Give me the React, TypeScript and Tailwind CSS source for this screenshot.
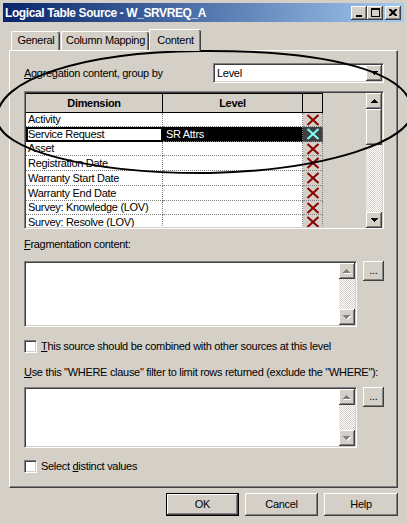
import React from "react";

const sunken =
  "border border-t-[#808080] border-l-[#808080] border-b-white border-r-white shadow-[inset_1px_1px_0_#404040,inset_-1px_-1px_0_#d4d0c8]";
const raised =
  "shadow-[inset_-1px_-1px_0_#404040,inset_1px_1px_0_#ffffff,inset_-2px_-2px_0_#808080,inset_2px_2px_0_#d4d0c8]";
const dither =
  "bg-[image:repeating-conic-gradient(#ffffff_0%_25%,#d4d0c8_0%_50%)] bg-[length:2px_2px]";

const UP = "M3 0h1v1h1v1h1v1h1v1H0V3h1V2h1V1h1z";
const DOWN = "M0 0h7v1h-1v1h-1v1h-1v1h-1v-1h-1v-1h-1v-1h-1z";

function Arrow({ dir, disabled }: { dir: "up" | "down"; disabled?: boolean }) {
  const d = dir === "up" ? UP : DOWN;
  if (disabled) {
    return (
      <svg width="8" height="5" viewBox="0 0 8 5" className="block">
        <path d={d} fill="#ffffff" transform="translate(1 1)" />
        <path d={d} fill="#808080" />
      </svg>
    );
  }
  return (
    <svg width="7" height="4" viewBox="0 0 7 4" className="block">
      <path d={d} fill="#000000" />
    </svg>
  );
}

function ScrollBtn({ dir, disabled }: { dir: "up" | "down"; disabled?: boolean }) {
  return (
    <div className={`w-[16px] h-[16px] shrink-0 bg-[#d4d0c8] ${raised} flex items-center justify-center`}>
      <Arrow dir={dir} disabled={disabled} />
    </div>
  );
}

function XMark({ color }: { color: string }) {
  return (
    <svg width="14" height="12" viewBox="0 0 14 12" className="block">
      <path d="M1.5 1 Q7 6 12.5 11" stroke={color} strokeWidth="2" fill="none" />
      <path d="M12.5 1 Q7 6 1.5 11" stroke={color} strokeWidth="2" fill="none" />
    </svg>
  );
}

function Checkbox() {
  return <div className={`w-[13px] h-[13px] shrink-0 bg-white ${sunken}`} />;
}

function TextBox({ h }: { h: string }) {
  return (
    <div className="flex items-start gap-[6px]">
      <div className={`w-[333px] ${h} bg-white ${sunken} p-[1px] flex justify-end`}>
        <div className="w-[16px] h-full flex flex-col">
          <ScrollBtn dir="up" disabled />
          <div className={`flex-1 ${dither}`} />
          <ScrollBtn dir="down" disabled />
        </div>
      </div>
      <div className={`w-[21px] h-[20px] bg-[#d4d0c8] ${raised} flex items-center justify-center text-[11px] leading-none pb-[2px]`}>
        ...
      </div>
    </div>
  );
}

function TitleBtn({ children }: { children: React.ReactNode }) {
  return (
    <div className={`w-[16px] h-[14px] bg-[#d4d0c8] ${raised} flex items-center justify-center`}>{children}</div>
  );
}

const rows = [
  "Activity",
  "Service Request",
  "Asset",
  "Registration Date",
  "Warranty Start Date",
  "Warranty End Date",
  "Survey: Knowledge (LOV)",
  "Survey: Resolve (LOV)",
];
const heights = [14, 15, 14, 15, 15, 15, 14, 15];

export default function App() {
  return (
    <div className="w-[407px] h-[524px] bg-[#d4d0c8] relative overflow-hidden pt-[3px] px-[3px] font-['Liberation_Sans',Arial,sans-serif] text-[11px] tracking-[-0.3px] text-black">
      {/* Title bar */}
      <div className="h-[19px] bg-gradient-to-r from-[#0a246a] to-[#a6caf0] flex items-center justify-between pl-[2px] pr-[3px]">
        <span className="text-white font-bold text-[12px] tracking-[-0.4px] leading-none">
          Logical Table Source - W_SRVREQ_A
        </span>
        <div className="flex items-center">
          <TitleBtn>
            <svg width="8" height="9" viewBox="0 0 8 9" className="block">
              <rect x="1" y="7" width="6" height="2" fill="#000" />
            </svg>
          </TitleBtn>
          <TitleBtn>
            <svg width="9" height="9" viewBox="0 0 9 9" className="block">
              <path d="M0 0h9v9H0z M1 2v6h7V2z" fill="#000" fillRule="evenodd" />
            </svg>
          </TitleBtn>
          <div className="w-[2px]" />
          <TitleBtn>
            <svg width="8" height="7" viewBox="0 0 8 7" className="block">
              <path d="M0 0h2l2 2 2-2h2v1L5.5 3.5 8 6v1H6L4 5 2 7H0V6l2.5-2.5L0 1z" fill="#000" />
            </svg>
          </TitleBtn>
        </div>
      </div>

      {/* Tabs */}
      <div className="mt-[7px] ml-[8px] h-[21px] flex items-end">
        <div className="w-[49px] h-[19px] border-t border-l border-white rounded-tl-[2px] rounded-tr-[2px] shadow-[inset_-1px_0_0_#404040,inset_-2px_0_0_#808080] flex items-center justify-center pb-[1px]">
          General
        </div>
        <div className="ml-[1px] w-[88px] h-[19px] border-t border-l border-white rounded-tl-[2px] rounded-tr-[2px] shadow-[inset_-1px_0_0_#404040,inset_-2px_0_0_#808080] flex items-center justify-center pb-[1px]">
          Column Mapping
        </div>
        <div className="ml-[0px] w-[52px] h-[22px] mb-[-1px] relative z-10 bg-[#d4d0c8] border-t border-l border-white rounded-tl-[2px] rounded-tr-[2px] shadow-[inset_-1px_0_0_#404040,inset_-2px_0_0_#808080] flex items-center justify-center pb-[1px]">
          Content
        </div>
      </div>

      {/* Panel */}
      <div className="ml-[6px] w-[389px] h-[438px] border-t border-l border-white border-r border-r-[#404040] border-b border-b-[#404040] shadow-[inset_-1px_-1px_0_#808080] pl-[14px] flex flex-col">
        {/* Aggregation */}
        <div className="mt-[12px] w-[360px] h-[20px] flex items-center justify-between">
          <span>
            <span className="underline">A</span>ggregation content, group by
          </span>
          <div className={`w-[171px] h-[20px] bg-white ${sunken} p-[1px] flex items-center`}>
            <span className="flex-1 pl-[2px]">Level</span>
            <ScrollBtn dir="down" />
          </div>
        </div>

        {/* Table */}
        <div className={`mt-[8px] w-[360px] h-[138px] bg-[#d4d0c8] ${sunken} p-[1px] flex overflow-hidden`}>
          <div className="w-[297px] shrink-0 flex flex-col overflow-hidden">
            <div className="h-[20px] shrink-0 flex font-bold">
              <div className="w-[137px] border-t border-b border-r border-black flex items-center justify-center">
                Dimension
              </div>
              <div className="w-[140px] border-t border-b border-r border-black flex items-center justify-center">
                Level
              </div>
              <div className="w-[20px] border-t border-b border-r border-black" />
            </div>
            {rows.map((name, i) => {
              const sel = i === 1;
              return (
                <div key={name} className="flex shrink-0" style={{ height: heights[i] }}>
                  <div
                    className={`w-[137px] shrink-0 bg-white border-r border-b border-dotted border-[#808080] pl-[2px] flex items-center whitespace-nowrap overflow-hidden leading-none ${
                      sel ? "outline-2 outline-black -outline-offset-2" : ""
                    }`}
                  >
                    {name}
                  </div>
                  <div
                    className={`w-[140px] shrink-0 border-r border-b border-dotted border-[#808080] pl-[3px] flex items-center leading-none ${
                      sel ? "bg-black text-white" : "bg-white"
                    }`}
                  >
                    {sel ? "SR Attrs" : ""}
                  </div>
                  <div
                    className={`w-[20px] shrink-0 border-r border-b border-dotted border-[#808080] flex items-center justify-center ${
                      sel ? "bg-[#404040]" : "bg-[#d4d0c8]"
                    }`}
                  >
                    <XMark color={sel ? "#80ffff" : "#8b0000"} />
                  </div>
                </div>
              );
            })}
          </div>
          <div className="flex-1" />
          <div className="w-[16px] h-[135px] shrink-0 flex flex-col">
            <ScrollBtn dir="up" />
            <div className={`w-[16px] h-[36px] bg-[#d4d0c8] ${raised}`} />
            <div className={`flex-1 ${dither}`} />
            <ScrollBtn dir="down" />
          </div>
        </div>

        {/* Fragmentation */}
        <div className="mt-[8px] h-[14px] flex items-center">
          <span>
            <span className="underline">F</span>ragmentation content:
          </span>
        </div>
        <div className="mt-[10px]">
          <TextBox h="h-[66px]" />
        </div>

        <div className="mt-[13px] h-[13px] flex items-center gap-[4px]">
          <Checkbox />
          <span>
            <span className="underline">T</span>his source should be combined with other sources at this level
          </span>
        </div>

        <div className="mt-[12px] h-[14px] flex items-center">
          <span>
            <span className="underline">U</span>se this "WHERE clause" filter to limit rows returned (exclude the "WHERE"):
          </span>
        </div>
        <div className="mt-[8px]">
          <TextBox h="h-[61px]" />
        </div>

        <div className="mt-[12px] h-[13px] flex items-center gap-[4px]">
          <Checkbox />
          <span>
            Select <span className="underline">d</span>istinct values
          </span>
        </div>
      </div>

      {/* Buttons */}
      <div className="mt-[5px] flex justify-end gap-[6px] pr-[6px]">
        <div className="w-[73px] h-[23px] border border-black">
          <div className={`w-full h-full bg-[#d4d0c8] ${raised} flex items-center justify-center`}>OK</div>
        </div>
        <div className={`w-[73px] h-[23px] bg-[#d4d0c8] ${raised} flex items-center justify-center`}>Cancel</div>
        <div className={`w-[74px] h-[23px] bg-[#d4d0c8] ${raised} flex items-center justify-center`}>Help</div>
      </div>

      {/* Hand-drawn ellipse annotation */}
      <svg
        className="absolute left-0 top-0 pointer-events-none"
        width="407"
        height="524"
        viewBox="0 0 407 524"
      >
        <path
          d="M-3 118 C-3 80 80 52 200 51 C330 50 412 72 412 112 C412 140 330 170 210 173 C90 174 -3 150 -3 118 Z"
          fill="none"
          stroke="#000"
          strokeWidth="2"
        />
      </svg>
    </div>
  );
}
